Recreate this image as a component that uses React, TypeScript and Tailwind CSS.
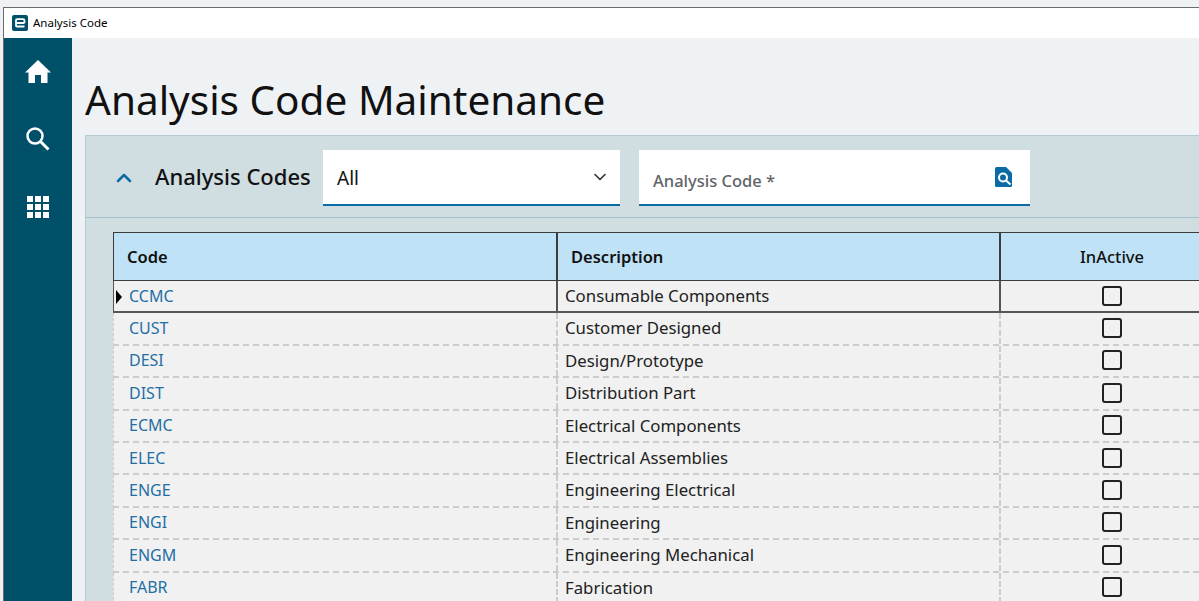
import { ChevronDown, ChevronUp } from "lucide-react";

const rows = [
  ["CCMC", "Consumable Components"],
  ["CUST", "Customer Designed"],
  ["DESI", "Design/Prototype"],
  ["DIST", "Distribution Part"],
  ["ECMC", "Electrical Components"],
  ["ELEC", "Electrical Assemblies"],
  ["ENGE", "Engineering Electrical"],
  ["ENGI", "Engineering"],
  ["ENGM", "Engineering Mechanical"],
  ["FABR", "Fabrication"],
];

function Logo() {
  return (
    <svg width="16" height="16" viewBox="0 0 16 16" className="shrink-0">
      <rect width="16" height="16" rx="2" fill="#00506a" />
      <path d="M12.5 8H4M4 5.2q0-1 1-1h6q1.500 0 1.500 1.500V8M4 5v5.500q0 1 1 1h7.500" fill="none" stroke="#fff" strokeWidth="1.800" />
    </svg>
  );
}

function HomeIcon() {
  return (
    <svg width="26" height="24" viewBox="0 0 26 24">
      <path d="M13 0 L26 12.500 H22.500 V23 H16 V15 H10 V23 H3.500 V12.500 H0 Z" fill="#fff" />
    </svg>
  );
}

function SearchIcon() {
  return (
    <svg width="24" height="24" viewBox="0 0 24 24">
      <circle cx="9" cy="9" r="7.500" fill="none" stroke="#fff" strokeWidth="2.500" />
      <path d="M14.500 14.500 L22.500 22.500" stroke="#fff" strokeWidth="3" />
    </svg>
  );
}

function GridIcon() {
  return (
    <div className="grid grid-cols-3 gap-[2px]">
      {Array.from({ length: 9 }).map((_, i) => (
        <div key={i} className="w-[6px] h-[6px] bg-white" />
      ))}
    </div>
  );
}

function LookupIcon() {
  return (
    <svg width="17" height="20" viewBox="0 0 17 20">
      <path d="M1.500 0 H11 L17 6 V18.500 Q17 20 15.500 20 H1.500 Q0 20 0 18.500 V1.500 Q0 0 1.500 0 Z" fill="#0b6ca5" />
      <circle cx="8" cy="10.500" r="4" fill="none" stroke="#fff" strokeWidth="2" />
      <path d="M11 13.500 L15.500 17.500" stroke="#fff" strokeWidth="2" />
    </svg>
  );
}

export default function App() {
  return (
    <div className="h-[601px] w-[1199px] overflow-hidden bg-[#eef2f5] pt-[7px] pl-[3px] font-['Noto_Sans',sans-serif] text-[#111]">
      <div className="h-[594px] border-l border-t border-[#6b6b6b] bg-[#eef2f5]">
        <div className="h-[30px] bg-white flex items-center gap-[5px] pl-[8px]">
          <Logo />
          <span className="text-[11.5px] text-black">Analysis Code</span>
        </div>
        <div className="flex h-[564px]">
          <aside className="w-[68px] shrink-0 bg-[#00506a] flex flex-col items-center pt-[22px]">
            <div className="h-[24px]"><HomeIcon /></div>
            <div className="mt-[43px] h-[24px]"><SearchIcon /></div>
            <div className="mt-[45px]"><GridIcon /></div>
          </aside>
          <main className="flex-1 min-w-0 pl-[13px]">
            <h1 className="h-[97px] pt-[33px] text-[40.5px] leading-[58px] text-[#111] whitespace-nowrap">Analysis Code Maintenance</h1>
            <section className="bg-[#d0dde1] border-l border-t border-[#b5cbd2] h-[480px]">
              <div className="h-[82px] pt-[2px] border-b border-[#a3c0ca] flex items-center">
                <ChevronUp className="ml-[26px] text-[#0b6ca5]" size={24} strokeWidth={2.500} />
                <span className="ml-[19px] w-[168px] text-[22px] font-medium text-[#111] whitespace-nowrap -mt-[2px]">Analysis Codes</span>
                <div className="w-[297px] h-[56px] bg-white border-b-2 border-[#0b6ca5] flex items-center justify-between pl-[14px] pr-[10px]">
                  <span className="text-[19px] text-[#111] mt-[3px]">All</span>
                  <ChevronDown className="text-[#333]" size={20} strokeWidth={2} />
                </div>
                <div className="ml-[19px] w-[391px] h-[56px] bg-white border-b-2 border-[#0b6ca5] flex items-center justify-between pl-[14px] pr-[18px]">
                  <span className="text-[16.5px] font-medium text-[#5f6468] mt-[10px]">Analysis Code *</span>
                  <LookupIcon />
                </div>
              </div>
              <div className="ml-[27px] mt-[14px]">
                <div className="flex h-[49px] bg-[#bfe2f7] border-l border-t border-b border-[#3c3c3c] text-[16.5px] font-semibold text-[#111]">
                  <div className="w-[444px] shrink-0 pl-[13px] pt-[2px] flex items-center border-r-2 border-[#3c3c3c]">Code</div>
                  <div className="w-[443px] shrink-0 pl-[13px] pt-[2px] flex items-center border-r-2 border-[#3c3c3c]">Description</div>
                  <div className="w-[222px] shrink-0 pt-[2px] flex items-center justify-center font-medium">InActive</div>
                </div>
                {rows.map((r, i) => {
                  const line = i === 0 ? "border-solid border-[#555]" : "border-dashed border-[#ccc]";
                  return (
                    <div
                      key={r[0]}
                      className={`flex h-[32.4px] bg-[#f1f1f1] border-l border-b-2 ${line}`}
                    >
                      <div className={`relative w-[444px] shrink-0 pl-[15px] pb-[1px] flex items-center border-r-2 text-[16px] ${line}`}>
                        {i === 0 && (
                          <span className="absolute left-[2px] top-[9px] border-y-[7px] border-l-[6px] border-y-transparent border-l-black" />
                        )}
                        <span className="text-[#1f6fa5]">{r[0]}</span>
                      </div>
                      <div className={`w-[443px] shrink-0 pl-[7px] pb-[1px] flex items-center border-r-2 text-[16.8px] ${line}`}>
                        <span className="text-[#222]">{r[1]}</span>
                      </div>
                      <div className="w-[222px] shrink-0 pb-[1px] flex items-center justify-center">
                        <div className="w-[20px] h-[20px] rounded-[3px] border-2 border-[#222]" />
                      </div>
                    </div>
                  );
                })}
              </div>
            </section>
          </main>
        </div>
      </div>
    </div>
  );
}
